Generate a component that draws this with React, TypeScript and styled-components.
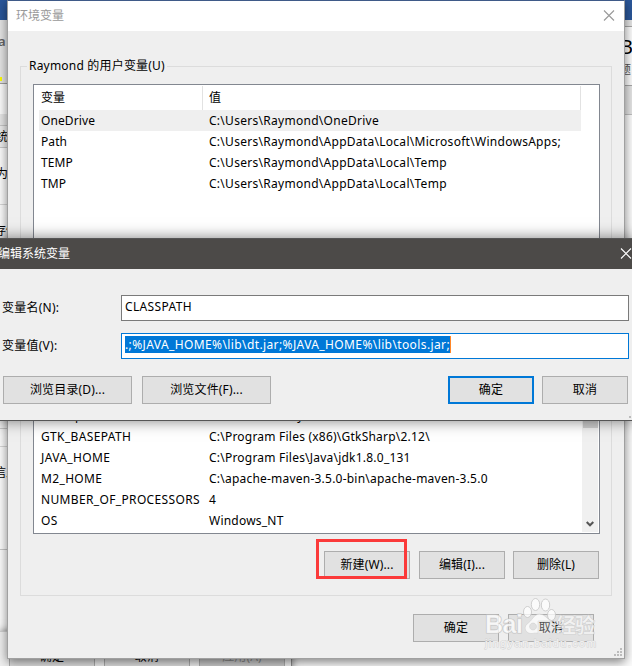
import React from 'react';
import styled, { createGlobalStyle, css } from 'styled-components';

const Global = createGlobalStyle`
  * { box-sizing: border-box; }
  body {
    margin: 0;
    font: 12px/16px 'Noto Sans', 'Noto Sans CJK SC', sans-serif;
    color: #000;
  }
`;

const Desktop = styled.div`
  position: relative;
  width: 632px;
  height: 666px;
  overflow: hidden;
  background: #fdfdfd;
`;

/* Slices of the windows that stay visible at the desktop edges */
const Edge = styled.div<{ $side: 'left' | 'right' }>`
  position: absolute;
  top: 0;
  ${p => p.$side}: 0;
  width: 8px;
  height: 666px;
  display: flex;
  flex-direction: column;
`;

const Slice = styled.div<{ $h: number; $bg?: string; $line?: string; $size?: number; $color?: string; $shift?: number; $pad?: number; $bold?: boolean }>`
  flex: none;
  height: ${p => p.$h}px;
  background: ${p => p.$bg ?? '#fdfdfd'};
  border-bottom: ${p => (p.$line ? `1px solid ${p.$line}` : '0')};
  font-size: ${p => p.$size ?? 12}px;
  font-weight: ${p => (p.$bold ? 600 : 400)};
  color: ${p => p.$color ?? '#000'};
  overflow: hidden;
  white-space: nowrap;
  text-indent: ${p => p.$shift ?? 0}px;
  padding-top: ${p => p.$pad ?? 0}px;
`;

const PropertiesWindow = styled.div`
  position: absolute;
  left: 0;
  top: 631px;
  width: 292px;
  height: 60px;
  padding: 11px 0 0 9px;
  display: flex;
  gap: 9px;
  background: #f0f0f0;
  border-top: 1px solid #d0d0d0;
  border-right: 1px solid #8c8c8c;
  box-shadow: 0 0 8px rgba(0, 0, 0, 0.5);
`;

const Dialog = styled.section`
  position: absolute;
  left: 7px;
  top: 0;
  width: 618px;
  height: 659px;
  display: flex;
  flex-direction: column;
  background: #efefef;
  border: 1px solid #a0a0a0;
  border-top-color: #3f5a88;
  box-shadow: 0 3px 10px rgba(0, 0, 0, 0.5);
`;

const TitleBar = styled.header<{ $dark?: boolean }>`
  flex: none;
  height: 30px;
  display: flex;
  align-items: center;
  justify-content: space-between;
  padding: 0 9px 0 8px;
  background: #fff;
  color: #999;
  ${p => p.$dark && css`
    padding: 0 1px 0 0;
    background: #4c4a48;
    color: #fff;
  `}
`;

const GroupBox = styled.fieldset`
  margin: 27px 12px 0;
  height: 538px;
  padding: 0 11px 0 12px;
  min-width: 0;
  border: 1px solid #dcdcdc;
  display: flex;
  flex-direction: column;
`;

const Legend = styled.legend`
  height: 16px;
  margin-left: -6px;
  padding: 0 2px;
  letter-spacing: 0.2px;
`;

const ListView = styled.div`
  height: 450px;
  margin-top: 10px;
  border: 1px solid #828790;
  background: #fff;
  display: flex;
  flex-direction: column;
  justify-content: space-between;
  padding: 1px 1px 1px 5px;
`;

const Table = styled.div`
  width: 542px;
`;

const Row = styled.div<{ $head?: boolean; $selected?: boolean }>`
  display: grid;
  grid-template-columns: 164px 1fr;
  height: ${p => (p.$head ? 24 : 21)}px;
  align-items: center;
  white-space: pre;
  background: ${p => (p.$selected ? '#efefef' : 'transparent')};
`;

const Cell = styled.span<{ $sep?: boolean; $track?: number }>`
  height: 100%;
  display: flex;
  align-items: center;
  padding-left: 2px;
  border-right: ${p => (p.$sep ? '1px solid #e2e2e2' : '0')};
  letter-spacing: ${p => p.$track ?? 0.28}px;
  &:last-child { padding-left: 6px; }
`;

const Lower = styled.div`
  display: flex;
  justify-content: space-between;
  align-items: flex-end;
  & > :first-child { margin-bottom: 1px; }
`;

const ScrollBar = styled.div`
  width: 16px;
  height: 126px;
  display: flex;
  flex-direction: column;
  justify-content: space-between;
  align-items: center;
  background: #f0f0f0;
  padding-bottom: 4px;
`;

const Thumb = styled.div`
  width: 15px;
  height: 22px;
  background: #cdcdcd;
`;

const Buttons = styled.div<{ $m: string; $tight?: boolean }>`
  display: flex;
  justify-content: flex-end;
  gap: 9px;
  margin: ${p => p.$m};
  & > :last-child { margin-left: ${p => (p.$tight ? -1 : 0)}px; }
`;

const Button = styled.button<{ $w?: number; $primary?: boolean; $off?: boolean }>`
  flex: none;
  width: ${p => p.$w ?? 86}px;
  height: 28px;
  padding: 0;
  font: inherit;
  letter-spacing: 0.15px;
  color: ${p => (p.$off ? '#8a8a8a' : '#000')};
  background: ${p => (p.$off ? '#cccccc' : '#e1e1e1')};
  border: ${p => (p.$primary ? '2px solid #0078d7' : '1px solid #adadad')};
`;

const Highlight = styled.div`
  position: absolute;
  left: 316px;
  top: 539px;
  width: 91px;
  height: 40px;
  border: 3px solid #fb3a3a;
`;

const Editor = styled.section`
  position: absolute;
  left: -3px;
  top: 238px;
  width: 637px;
  height: 183px;
  background: #efefef;
  border: 1px solid #555;
  box-shadow: 0 0 14px rgba(0, 0, 0, 0.5);
`;

const Form = styled.div`
  display: grid;
  grid-template-columns: 119px 508px;
  row-gap: 12px;
  margin: 26px 0 0 4px;
  align-items: center;
`;

const Field = styled.div<{ $focus?: boolean }>`
  height: 26px;
  padding: 2px 3px;
  line-height: 18px;
  letter-spacing: 0.35px;
  background: #fff;
  border: 1px solid ${p => (p.$focus ? '#0078d7' : '#7a7a7a')};
`;

const Selection = styled.span`
  display: block;
  height: 17px;
  width: 326px;
  color: #fff;
  letter-spacing: 0.39px;
  white-space: nowrap;
  background: #0078d7;
  border-right: 1px solid #ff8728;
`;

const Label = styled.label`
  letter-spacing: 0.25px;
`;

const EditorActions = styled.div`
  display: flex;
  margin: 17px 0 0 5px;
  gap: 10px;
  & > :nth-child(3) { margin-left: 167px; }
  & > :nth-child(4) { margin-left: -2px; }
`;

const Watermark = styled.svg`
  position: absolute;
  left: 480px;
  top: 590px;
`;

const Grip = styled.svg`
  position: absolute;
  right: 2px;
  bottom: 2px;
`;

const Close = ({ color }: { color: string }) => (
  <svg width="12" height="12" viewBox="0 0 12 12" stroke={color} strokeWidth="1.1">
    <path d="M1 .5L11 10.5M11 .5L1 10.5" />
  </svg>
);

const userVars = [
  ['OneDrive', 'C:\\Users\\Raymond\\OneDrive'],
  ['Path', 'C:\\Users\\Raymond\\AppData\\Local\\Microsoft\\WindowsApps;'],
  ['TEMP', 'C:\\Users\\Raymond\\AppData\\Local\\Temp'],
  ['TMP', 'C:\\Users\\Raymond\\AppData\\Local\\Temp'],
];

const systemVars = [
  ['ComSpec', 'C:\\WINDOWS\\system32\\cmd.exe'],
  ['GTK_BASEPATH', 'C:\\Program Files (x86)\\GtkSharp\\2.12\\'],
  ['JAVA_HOME', 'C:\\Program Files\\Java\\jdk1.8.0_131'],
  ['M2_HOME', 'C:\\apache-maven-3.5.0-bin\\apache-maven-3.5.0'],
  ['NUMBER_OF_PROCESSORS', '4'],
  ['OS', 'Windows_NT'],
];

export default function App() {
  return (
    <Desktop>
      <Global />
      <Edge $side="left">
        <Slice $h={20} $bg="#2b579a" />
        <Slice $h={57} $bg="#e6e6e6" $color="#666" $size={13} $shift={-2} $pad={13} $bold>a</Slice>
        <Slice $h={4} $bg="linear-gradient(90deg,#ffff00 2px,#e6e6e6 2px)" />
        <Slice $h={3} $bg="#e6e6e6" $line="#a0a0a0" />
        <Slice $h={30} />
        <Slice $h={12} $bg="#e8e8e8" $line="#c8c8c8" />
        <Slice $h={22} $bg="#eeeeee" $line="#c8c8c8" $shift={-4} $pad={3}>统</Slice>
        <Slice $h={57} $line="#d8d8d8" $shift={-4} $pad={18}>为</Slice>
        <Slice $h={224} $line="#d0d0d0" $shift={-6} $pad={18}>存储</Slice>
        <Slice $h={18} $line="#d8d8d8" />
        <Slice $h={103} $line="#c8c8c8" $shift={-6} $pad={18}>信息</Slice>
      </Edge>
      <Edge $side="right">
        <Slice $h={20} $bg="#2b579a" />
        <Slice $h={7} $bg="#e6e6e6" $line="#a8a8a8" />
        <Slice $h={34} $size={20} $shift={-4} $pad={12}>B</Slice>
        <Slice $h={25} $line="#a8a8a8" $color="#555" $shift={-5} $pad={1}>题</Slice>
        <Slice $h={29} $bg="#e6e6e6" $line="#c0c0c0" />
      </Edge>
      <PropertiesWindow>
        <Button>确定</Button>
        <Button>取消</Button>
        <Button $off>应用(A)</Button>
      </PropertiesWindow>

      <Dialog>
        <TitleBar><span>环境变量</span><Close color="#999" /></TitleBar>
        <GroupBox>
          <Legend>Raymond 的用户变量(U)</Legend>
          <ListView>
            <Table>
              <Row $head><Cell $sep $track={0}>变量</Cell><Cell $sep $track={0}>值</Cell></Row>
              {userVars.map(([name, value], i) => (
                <Row key={name} $selected={i === 0}><Cell $track={0.1}>{name}</Cell><Cell>{value}</Cell></Row>
              ))}
            </Table>
            <Lower>
              <Table>
                {systemVars.map(([name, value]) => (
                  <Row key={name}><Cell $track={0.35}>{name}</Cell><Cell $track={0.22}>{value}</Cell></Row>
                ))}
              </Table>
              <ScrollBar>
                <Thumb />
                <svg width="8" height="8" viewBox="0 0 8 8" fill="none" stroke="#555" strokeWidth="2">
                  <path d="M.7 2L4 5.3L7.3 2" />
                </svg>
              </ScrollBar>
            </Lower>
          </ListView>
          <Buttons $m="17px 1px 0 0" $tight>
            <Button>新建(W)...</Button>
            <Button>编辑(I)...</Button>
            <Button>删除(L)</Button>
          </Buttons>
        </GroupBox>
        <Buttons $m="18px 30px 0 0">
          <Button>确定</Button>
          <Button>取消</Button>
        </Buttons>
        <Grip width="8" height="8" fill="#bcbcbc">
          <path d="M6 0h2v2h-2zM3 3h2v2h-2zM6 3h2v2h-2zM0 6h2v2h-2zM3 6h2v2h-2zM6 6h2v2h-2z" />
        </Grip>
      </Dialog>

      <Highlight />

      <Editor>
        <TitleBar $dark><span>编辑系统变量</span><Close color="#fff" /></TitleBar>
        <Form>
          <Label>变量名(N):</Label>
          <Field>CLASSPATH</Field>
          <Label>变量值(V):</Label>
          <Field $focus><Selection>.;%JAVA_HOME%\lib\dt.jar;%JAVA_HOME%\lib\tools.jar;</Selection></Field>
        </Form>
        <EditorActions>
          <Button $w={129}>浏览目录(D)...</Button>
          <Button $w={129}>浏览文件(F)...</Button>
          <Button $primary>确定</Button>
          <Button>取消</Button>
        </EditorActions>
        <Grip width="2" height="2" fill="#bcbcbc"><path d="M0 0h2v2h-2z" /></Grip>
      </Editor>

      <Watermark width="130" height="66" fill="#fff" fillOpacity=".75" stroke="#c4c4c4" strokeWidth="1.2">
        <g fontFamily="'Liberation Sans', 'Noto Sans CJK SC', sans-serif" paintOrder="stroke">
          <text x="5" y="43" fontSize="25" fontWeight="bold" textLength="38">Bai</text>
          <text x="76" y="43" fontSize="20" fontWeight="bold" textLength="39" fillOpacity=".6" strokeWidth=".6">经验</text>
          <text x="5" y="57" fontSize="11.500" textLength="111" strokeWidth="1" stroke="#d2d2d2">jingyan.baidu.com</text>
        </g>
        <g strokeWidth=".8">
          <ellipse cx="47.5" cy="22" rx="4" ry="5.500" />
          <ellipse cx="55.5" cy="14.500" rx="4.200" ry="6" />
          <ellipse cx="65.500" cy="15" rx="4.200" ry="6" />
          <ellipse cx="71.500" cy="25" rx="4" ry="5.500" />
          <path fillRule="evenodd" strokeWidth=".4" d="M59.500 24C54 24 52 31 47 34C43 38 46 44 52 43.500Q54 43 58 43L58 31L74 31Q69 31 66 27Q63 24 59.500 24ZM53 33a3.500 3.500 0 1 0 .1 0Z" />
          <path fillOpacity=".3" stroke="none" d="M58 31H69Q76 35 74 40Q72 44 67 43.500L58 43Z" />
        </g>
      </Watermark>
    </Desktop>
  );
}
